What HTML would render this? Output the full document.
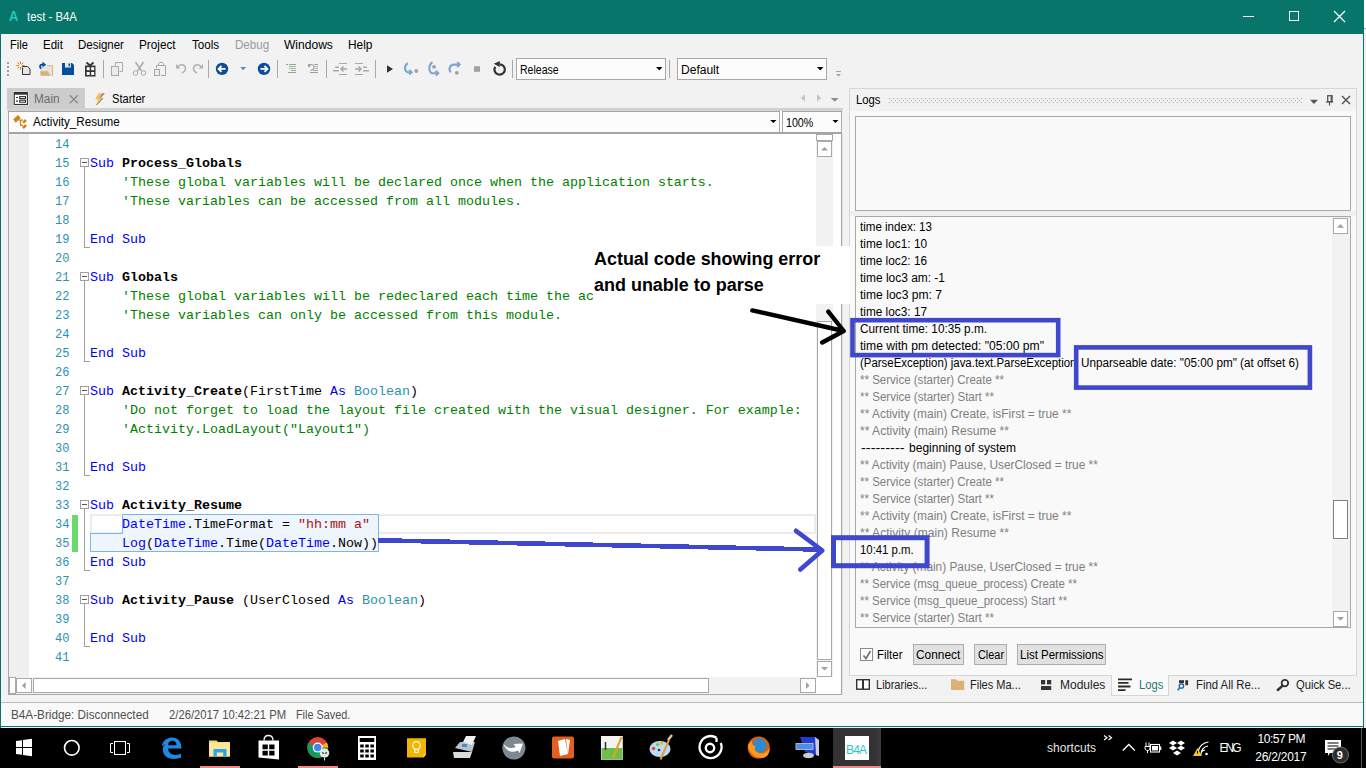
<!DOCTYPE html>
<html><head><meta charset="utf-8">
<style>
*{margin:0;padding:0;box-sizing:border-box}
html,body{width:1366px;height:768px;overflow:hidden;background:#f2f2f2;position:relative}
body{font-family:"Liberation Sans",sans-serif;font-size:12px;color:#000}
.a{position:absolute}
.t{position:absolute;white-space:pre;line-height:14px}
.mono{font-family:"Liberation Mono",monospace}
</style></head><body>
<!-- title bar -->
<div class="a" style="left:0;top:0;width:1364px;height:34px;background:#08756a"></div>
<div class="a" style="left:0;top:34px;width:1px;height:694px;background:#08756a"></div>
<div class="a" style="left:1363px;top:34px;width:1px;height:694px;background:#08756a"></div>
<div class="a" style="left:0;top:726px;width:1364px;height:1px;background:#08756a"></div>
<div class="a" style="left:1364px;top:0;width:2px;height:28px;background:#ffffff"></div>
<div class="a" style="left:1364px;top:28px;width:2px;height:1px;background:#a8a8a8"></div>
<div class="a" style="left:1364px;top:29px;width:2px;height:699px;background:#f4f1f1"></div>
<div class="t" style="left:9.4px;top:9px;font-size:14px;font-weight:bold;color:#25c6b9;transform:scaleX(0.9185);transform-origin:0.00px 0">A</div>
<div class="t" style="left:27.4px;top:10px;font-size:12px;color:#fff;transform:scaleX(0.9479);transform-origin:0.00px 0">test - B4A</div>
<!-- window buttons -->
<div class="a" style="left:1243px;top:16px;width:11px;height:1px;background:#fff"></div>
<div class="a" style="left:1289px;top:11px;width:10px;height:10px;border:1px solid #fff"></div>
<svg class="a" style="left:1333px;top:10px" width="13" height="13"><path d="M1 1L12 12M12 1L1 12" stroke="#fff" stroke-width="1.2"/></svg>

<!-- menu -->
<div class="t" style="left:10.2px;top:38px;transform:scaleX(0.9239);transform-origin:0.00px 0">File</div>
<div class="t" style="left:43.2px;top:38px;transform:scaleX(0.9600);transform-origin:0.00px 0">Edit</div>
<div class="t" style="left:78.3px;top:38px;transform:scaleX(0.9562);transform-origin:0.00px 0">Designer</div>
<div class="t" style="left:139.1px;top:38px;transform:scaleX(0.9793);transform-origin:0.00px 0">Project</div>
<div class="t" style="left:191.7px;top:38px;transform:scaleX(0.9679);transform-origin:0.00px 0">Tools</div>
<div class="t" style="left:234.5px;top:38px;color:#9a9a9a;transform:scaleX(0.9640);transform-origin:0.00px 0">Debug</div>
<div class="t" style="left:284.2px;top:38px;transform:scaleX(1.0036);transform-origin:0.00px 0">Windows</div>
<div class="t" style="left:348.1px;top:38px;transform:scaleX(0.9909);transform-origin:0.00px 0">Help</div>

<!-- TOOLBAR -->
<svg class="a" style="left:0;top:0" width="860" height="84">
<g fill="#a0a0a0"><rect x="7" y="62" width="2" height="2"/><rect x="7" y="66" width="2" height="2"/><rect x="7" y="70" width="2" height="2"/><rect x="7" y="74" width="2" height="2"/></g>
<!-- new -->
<path d="M22.5 66.5H27.5L30 69V74.5H22.5Z" fill="#e8e8e8" stroke="#333" stroke-width="1"/>
<g stroke="#e07800" stroke-width="1"><path d="M20.5 61.5V69.5M16.5 65.5H24.5M17.7 62.7L23.3 68.3M23.3 62.7L17.7 68.3"/></g>
<circle cx="20.5" cy="65.5" r="1.6" fill="#fff"/>
<!-- open -->
<rect x="40" y="65" width="12.8" height="11" fill="#e4e4e4"/>
<path d="M47 65.8H52.5V76" stroke="#e0b472" stroke-width="1.1" fill="none"/>
<path d="M40 71.2H47.6L50.9 75.8H41Z" fill="#ddb06c"/>
<path d="M41.4 68.3C39.2 67.4 39.6 64.6 42 64.6H44.5" stroke="#0050a0" stroke-width="1.8" fill="none"/>
<path d="M42.4 61.8L46.2 64.7L42.4 67.3Z" fill="#0050a0"/>
<!-- save -->
<path d="M62 63H72L74 65V75H62Z" fill="#0050a0"/>
<rect x="65" y="63" width="6" height="4.5" fill="#e8e8e8"/>
<rect x="68.5" y="63.5" width="1.6" height="2.8" fill="#0050a0"/>
<!-- package -->
<rect x="85" y="65.5" width="10.5" height="11" fill="#333"/>
<path d="M86.5 62.5L90 65.5L93.5 62.5" stroke="#333" stroke-width="1.8" fill="none"/>
<g fill="#fff"><rect x="86.7" y="67.2" width="3" height="3"/><rect x="91.2" y="67.2" width="3" height="3"/><rect x="86.7" y="72" width="3" height="3"/><rect x="91.2" y="72" width="3" height="3"/></g>
<g fill="#a8a8a8"><rect x="103" y="60" width="1" height="18"/><rect x="208" y="60" width="1" height="18"/><rect x="277" y="60" width="1" height="18"/><rect x="326" y="60" width="1" height="18"/><rect x="375" y="60" width="1" height="18"/><rect x="512" y="60" width="1" height="18"/><rect x="669" y="60" width="1" height="18"/></g>
<!-- copy -->
<g stroke="#a8a8a8" stroke-width="1" fill="none">
<path d="M115.5 65.5V62.5H122.5V71.5H119.5"/>
<rect x="111.5" y="66.5" width="7" height="9" fill="#ececec"/>
<!-- cut -->
<path d="M135.5 62L141.5 70.8M143.5 62L137.5 70.8" stroke-width="1.5"/>
<circle cx="135.5" cy="73" r="2.3"/><circle cx="143.5" cy="73" r="2.3"/>
<!-- paste -->
<path d="M156.5 68.5V65.5H165.5V75.5H161"/>
<path d="M158.5 65.5V63.5C158.5 62 163.5 62 163.5 63.5V65.5"/>
<rect x="154.5" y="69.5" width="5" height="6" fill="#ececec"/>
</g>
<g stroke="#b0b0b0" stroke-width="1.5" fill="none">
<path d="M178 66.5C181 63.5 185.5 65 185.5 68.5C185.5 70.5 184 72 182 73"/>
<path d="M201 66.5C198 63.5 193.5 65 193.5 68.5C193.5 70.5 195 72 197 73"/>
</g>
<path d="M176 64V68.5H180.5Z" fill="#b0b0b0"/><path d="M203 64V68.5H198.5Z" fill="#b0b0b0"/>
<!-- nav -->
<circle cx="222" cy="68.9" r="6.2" fill="#0a4d9c"/>
<path d="M225.5 68.9H219M221.5 66L218.5 68.9L221.5 71.8" stroke="#fff" stroke-width="1.8" fill="none"/>
<path d="M240.3 67H246L243.15 70.3Z" fill="#5b84c4"/>
<circle cx="264" cy="68.9" r="6.2" fill="#0a4d9c"/>
<path d="M260.5 68.9H267M264.5 66L267.5 68.9L264.5 71.8" stroke="#fff" stroke-width="1.8" fill="none"/>
<!-- comment -->
<g stroke-width="1">
<path d="M286 64.5H288M289 64.5H296M291 70.5H296M288 72.5H296" stroke="#a0a0a0"/>
<path d="M289 66.5H296M289 68.5H296" stroke="#8cc48c"/>
<path d="M314.5 64.5H318M313 70.5H318M310 72.5H318" stroke="#a0a0a0"/>
<path d="M315 66.5H318M315 68.5H318" stroke="#8cc48c"/>
</g>
<path d="M309 65.5L311 64.5C314.5 64.5 315 67.5 313 69.5L310.5 70.5" stroke="#a0a0a0" stroke-width="1.2" fill="none"/>
<rect x="308" y="64" width="2" height="3" fill="#a0a0a0"/>
<!-- outdent/indent -->
<g fill="#a8a8a8">
<rect x="339" y="63" width="8" height="1"/><rect x="339" y="74" width="8" height="1"/><rect x="335" y="66.5" width="4" height="1.5"/><rect x="333" y="70" width="6" height="1.5"/>
<rect x="355" y="63" width="8" height="1"/><rect x="355" y="74" width="8" height="1"/><rect x="363" y="66.5" width="4" height="1.5"/><rect x="363" y="70" width="6" height="1.5"/>
</g>
<g stroke="#a8a8a8" stroke-width="1.6" fill="none">
<path d="M347 69H341M343.5 66.5L341 69L343.5 71.5"/>
<path d="M355 69H361M358.5 66.5L361 69L358.5 71.5"/>
</g>
<!-- play -->
<path d="M387 65.2L393 69L387 72.8Z" fill="#333"/>
<!-- step into/over/out -->
<g stroke="#7ba6d3" stroke-width="2.1" fill="none">
<path d="M407.8 63.3C404.2 65 404 70.8 407.5 72.3H410.5"/>
<path d="M409.2 70L411.6 72.3L409.2 74.6"/>
<path d="M432.5 62.3C428.5 64 428.3 71.8 432 73.2H437.3"/>
<path d="M435.8 70.8L438.2 73.2L435.8 75.6"/>
<path d="M450.8 72.2C448.8 70.5 449 65 453.5 64.6H459.5"/>
<path d="M457.2 62.2L459.6 64.6L457.2 67"/>
</g>
<g fill="#a0a0a0"><circle cx="416.3" cy="71" r="1.9"/><circle cx="434" cy="66.8" r="1.9"/><circle cx="456.8" cy="72.8" r="1.9"/></g>
<rect x="474" y="66.2" width="6" height="5.6" fill="#a0a0a0"/>
<path d="M500 64.3A5.2 5.2 0 1 1 495.2 66.8" stroke="#333" stroke-width="2.2" fill="none"/>
<path d="M493.8 63.8L499.8 61V67Z" fill="#333"/>
<!-- grip right -->
<path d="M836.2 71.5H840.8" stroke="#a0a0a0" stroke-width="1"/>
<path d="M836.2 74H840.8L838.5 76.8Z" fill="#a0a0a0"/>
</svg>

<!-- combos -->
<div class="a" style="left:516px;top:58px;width:150px;height:22px;background:#fcfcfc;border:1px solid #a8a8a8"></div>
<div class="t" style="left:520.2px;top:63px;transform:scaleX(0.8795);transform-origin:0.00px 0">Release</div>
<svg class="a" style="left:656px;top:67px" width="7" height="4"><path d="M0 0H6.5L3.25 3.5Z" fill="#000"/></svg>
<div class="a" style="left:677px;top:58px;width:150px;height:22px;background:#fcfcfc;border:1px solid #a8a8a8"></div>
<div class="t" style="left:681.1px;top:63px;transform:scaleX(1.0026);transform-origin:0.00px 0">Default</div>
<svg class="a" style="left:817px;top:67px" width="7" height="4"><path d="M0 0H6.5L3.25 3.5Z" fill="#000"/></svg>

<!-- doc tabs -->
<div class="a" style="left:7px;top:88px;width:78px;height:20px;background:#cccccc"></div>
<div class="t" style="left:34.4px;top:92px;color:#6d6d6d;transform:scaleX(0.9846);transform-origin:0.00px 0">Main</div>
<div class="t" style="left:112.4px;top:92px;transform:scaleX(0.9250);transform-origin:0.00px 0">Starter</div>
<div class="a" style="left:7px;top:108px;width:836px;height:3px;background:#d2d2d2"></div>

<!-- module combo -->
<div class="a" style="left:8px;top:111px;width:772px;height:22px;background:#fcfcfc;border:1px solid #a8a8a8"></div>
<div class="a" style="left:780px;top:111px;width:2px;height:21px;background:#fff"></div>
<div class="t" style="left:33.4px;top:115px;transform:scaleX(0.9701);transform-origin:0.00px 0">Activity_Resume</div>
<div class="a" style="left:782px;top:111px;width:60px;height:22px;background:#fcfcfc;border:1px solid #a8a8a8"></div>
<div class="t" style="left:786px;top:116px;transform:scaleX(0.8878);transform-origin:0.00px 0">100%</div>

<!-- editor -->
<div class="a" style="left:8px;top:132px;width:834px;height:563px;background:#fff;border:1px solid #a8a8a8;border-top:2px solid #a5a5a5"></div>
<div class="a" style="left:9px;top:134px;width:20px;height:543px;background:#f0f0f0"></div>
<div class="a" style="left:842px;top:133px;width:1px;height:562px;background:#e2e2e2"></div>
<div class="a" style="left:90px;top:514px;width:726px;height:20px;border:2px solid #ececec"></div>
<svg class="a" style="left:0;top:0" width="842" height="700"><path d="M122.5 514.5H378.5V551.5H90.5V533.5H122.5Z" fill="#eef5fc" stroke="#7fb4e6" stroke-width="1"/></svg>
<div class="t mono" style="left:45.5px;top:136px;width:24px;text-align:right;line-height:19px;font-size:12px;color:#2b91af">14</div>
<div class="t mono" style="left:45.5px;top:155px;width:24px;text-align:right;line-height:19px;font-size:12px;color:#2b91af">15</div>
<div class="t mono" style="left:90px;top:154px;line-height:19px;font-size:13.33px"><span style="color:#0000ff">Sub</span><span style="color:#000"> </span><span style="color:#000;font-weight:bold">Process_Globals</span></div>
<div class="t mono" style="left:45.5px;top:174px;width:24px;text-align:right;line-height:19px;font-size:12px;color:#2b91af">16</div>
<div class="t mono" style="left:90px;top:173px;line-height:19px;font-size:13.33px"><span style="color:#000">    </span><span style="color:#008000">&#x27;These global variables will be declared once when the application starts.</span></div>
<div class="t mono" style="left:45.5px;top:193px;width:24px;text-align:right;line-height:19px;font-size:12px;color:#2b91af">17</div>
<div class="t mono" style="left:90px;top:192px;line-height:19px;font-size:13.33px"><span style="color:#000">    </span><span style="color:#008000">&#x27;These variables can be accessed from all modules.</span></div>
<div class="t mono" style="left:45.5px;top:212px;width:24px;text-align:right;line-height:19px;font-size:12px;color:#2b91af">18</div>
<div class="t mono" style="left:45.5px;top:231px;width:24px;text-align:right;line-height:19px;font-size:12px;color:#2b91af">19</div>
<div class="t mono" style="left:90px;top:230px;line-height:19px;font-size:13.33px"><span style="color:#0000ff">End Sub</span></div>
<div class="t mono" style="left:45.5px;top:250px;width:24px;text-align:right;line-height:19px;font-size:12px;color:#2b91af">20</div>
<div class="t mono" style="left:45.5px;top:269px;width:24px;text-align:right;line-height:19px;font-size:12px;color:#2b91af">21</div>
<div class="t mono" style="left:90px;top:268px;line-height:19px;font-size:13.33px"><span style="color:#0000ff">Sub</span><span style="color:#000"> </span><span style="color:#000;font-weight:bold">Globals</span></div>
<div class="t mono" style="left:45.5px;top:288px;width:24px;text-align:right;line-height:19px;font-size:12px;color:#2b91af">22</div>
<div class="t mono" style="left:90px;top:287px;line-height:19px;font-size:13.33px"><span style="color:#000">    </span><span style="color:#008000">&#x27;These global variables will be redeclared each time the activity is created.</span></div>
<div class="t mono" style="left:45.5px;top:307px;width:24px;text-align:right;line-height:19px;font-size:12px;color:#2b91af">23</div>
<div class="t mono" style="left:90px;top:306px;line-height:19px;font-size:13.33px"><span style="color:#000">    </span><span style="color:#008000">&#x27;These variables can only be accessed from this module.</span></div>
<div class="t mono" style="left:45.5px;top:326px;width:24px;text-align:right;line-height:19px;font-size:12px;color:#2b91af">24</div>
<div class="t mono" style="left:45.5px;top:345px;width:24px;text-align:right;line-height:19px;font-size:12px;color:#2b91af">25</div>
<div class="t mono" style="left:90px;top:344px;line-height:19px;font-size:13.33px"><span style="color:#0000ff">End Sub</span></div>
<div class="t mono" style="left:45.5px;top:364px;width:24px;text-align:right;line-height:19px;font-size:12px;color:#2b91af">26</div>
<div class="t mono" style="left:45.5px;top:383px;width:24px;text-align:right;line-height:19px;font-size:12px;color:#2b91af">27</div>
<div class="t mono" style="left:90px;top:382px;line-height:19px;font-size:13.33px"><span style="color:#0000ff">Sub</span><span style="color:#000"> </span><span style="color:#000;font-weight:bold">Activity_Create</span><span style="color:#000">(FirstTime </span><span style="color:#0000ff">As</span><span style="color:#000"> </span><span style="color:#2b91af">Boolean</span><span style="color:#000">)</span></div>
<div class="t mono" style="left:45.5px;top:402px;width:24px;text-align:right;line-height:19px;font-size:12px;color:#2b91af">28</div>
<div class="t mono" style="left:90px;top:401px;line-height:19px;font-size:13.33px"><span style="color:#000">    </span><span style="color:#008000">&#x27;Do not forget to load the layout file created with the visual designer. For example:</span></div>
<div class="t mono" style="left:45.5px;top:421px;width:24px;text-align:right;line-height:19px;font-size:12px;color:#2b91af">29</div>
<div class="t mono" style="left:90px;top:420px;line-height:19px;font-size:13.33px"><span style="color:#000">    </span><span style="color:#008000">&#x27;Activity.LoadLayout(&quot;Layout1&quot;)</span></div>
<div class="t mono" style="left:45.5px;top:440px;width:24px;text-align:right;line-height:19px;font-size:12px;color:#2b91af">30</div>
<div class="t mono" style="left:45.5px;top:459px;width:24px;text-align:right;line-height:19px;font-size:12px;color:#2b91af">31</div>
<div class="t mono" style="left:90px;top:458px;line-height:19px;font-size:13.33px"><span style="color:#0000ff">End Sub</span></div>
<div class="t mono" style="left:45.5px;top:478px;width:24px;text-align:right;line-height:19px;font-size:12px;color:#2b91af">32</div>
<div class="t mono" style="left:45.5px;top:497px;width:24px;text-align:right;line-height:19px;font-size:12px;color:#2b91af">33</div>
<div class="t mono" style="left:90px;top:496px;line-height:19px;font-size:13.33px"><span style="color:#0000ff">Sub</span><span style="color:#000"> </span><span style="color:#000;font-weight:bold">Activity_Resume</span></div>
<div class="t mono" style="left:45.5px;top:516px;width:24px;text-align:right;line-height:19px;font-size:12px;color:#2b91af">34</div>
<div class="t mono" style="left:90px;top:515px;line-height:19px;font-size:13.33px"><span style="color:#000">    </span><span style="color:#0000ff">DateTime</span><span style="color:#000">.TimeFormat = </span><span style="color:#a31515">&quot;hh:mm a&quot;</span></div>
<div class="t mono" style="left:45.5px;top:535px;width:24px;text-align:right;line-height:19px;font-size:12px;color:#2b91af">35</div>
<div class="t mono" style="left:90px;top:534px;line-height:19px;font-size:13.33px"><span style="color:#000">    </span><span style="color:#0000ff">Log</span><span style="color:#000">(</span><span style="color:#0000ff">DateTime</span><span style="color:#000">.Time(</span><span style="color:#0000ff">DateTime</span><span style="color:#000">.Now))</span></div>
<div class="t mono" style="left:45.5px;top:554px;width:24px;text-align:right;line-height:19px;font-size:12px;color:#2b91af">36</div>
<div class="t mono" style="left:90px;top:553px;line-height:19px;font-size:13.33px"><span style="color:#0000ff">End Sub</span></div>
<div class="t mono" style="left:45.5px;top:573px;width:24px;text-align:right;line-height:19px;font-size:12px;color:#2b91af">37</div>
<div class="t mono" style="left:45.5px;top:592px;width:24px;text-align:right;line-height:19px;font-size:12px;color:#2b91af">38</div>
<div class="t mono" style="left:90px;top:591px;line-height:19px;font-size:13.33px"><span style="color:#0000ff">Sub</span><span style="color:#000"> </span><span style="color:#000;font-weight:bold">Activity_Pause</span><span style="color:#000"> (UserClosed </span><span style="color:#0000ff">As</span><span style="color:#000"> </span><span style="color:#2b91af">Boolean</span><span style="color:#000">)</span></div>
<div class="t mono" style="left:45.5px;top:611px;width:24px;text-align:right;line-height:19px;font-size:12px;color:#2b91af">39</div>
<div class="t mono" style="left:45.5px;top:630px;width:24px;text-align:right;line-height:19px;font-size:12px;color:#2b91af">40</div>
<div class="t mono" style="left:90px;top:629px;line-height:19px;font-size:13.33px"><span style="color:#0000ff">End Sub</span></div>
<div class="t mono" style="left:45.5px;top:649px;width:24px;text-align:right;line-height:19px;font-size:12px;color:#2b91af">41</div>
<div class="a" style="left:80px;top:158px;width:9px;height:9px;border:1px solid #a0a0a0;background:#fff"></div>
<div class="a" style="left:82px;top:162px;width:5px;height:1px;background:#555"></div>
<div class="a" style="left:84px;top:167px;width:1px;height:80px;background:#a0a0a0"></div>
<div class="a" style="left:84px;top:247px;width:6px;height:1px;background:#a0a0a0"></div>
<div class="a" style="left:80px;top:272px;width:9px;height:9px;border:1px solid #a0a0a0;background:#fff"></div>
<div class="a" style="left:82px;top:276px;width:5px;height:1px;background:#555"></div>
<div class="a" style="left:84px;top:281px;width:1px;height:80px;background:#a0a0a0"></div>
<div class="a" style="left:84px;top:361px;width:6px;height:1px;background:#a0a0a0"></div>
<div class="a" style="left:80px;top:386px;width:9px;height:9px;border:1px solid #a0a0a0;background:#fff"></div>
<div class="a" style="left:82px;top:390px;width:5px;height:1px;background:#555"></div>
<div class="a" style="left:84px;top:395px;width:1px;height:80px;background:#a0a0a0"></div>
<div class="a" style="left:84px;top:475px;width:6px;height:1px;background:#a0a0a0"></div>
<div class="a" style="left:80px;top:500px;width:9px;height:9px;border:1px solid #a0a0a0;background:#fff"></div>
<div class="a" style="left:82px;top:504px;width:5px;height:1px;background:#555"></div>
<div class="a" style="left:84px;top:509px;width:1px;height:61px;background:#a0a0a0"></div>
<div class="a" style="left:84px;top:570px;width:6px;height:1px;background:#a0a0a0"></div>
<div class="a" style="left:80px;top:595px;width:9px;height:9px;border:1px solid #a0a0a0;background:#fff"></div>
<div class="a" style="left:82px;top:599px;width:5px;height:1px;background:#555"></div>
<div class="a" style="left:84px;top:604px;width:1px;height:42px;background:#a0a0a0"></div>
<div class="a" style="left:84px;top:646px;width:6px;height:1px;background:#a0a0a0"></div>
<div class="a" style="left:72px;top:515px;width:6px;height:37px;background:#6ad86a"></div>
<div class="a" style="left:816px;top:134px;width:17px;height:543px;background:#f2f2f2"></div>
<div class="a" style="left:816px;top:134px;width:17px;height:7px;background:#fff;border:1px solid #a8a8a8"></div>
<div class="a" style="left:817px;top:141px;width:15px;height:16px;background:#fff;border:1px solid #a8a8a8"></div>
<svg class="a" style="left:821px;top:147px" width="7" height="4"><path d="M0 3.6H7L3.5 0Z" fill="#a0a0a0"/></svg>
<div class="a" style="left:817px;top:321px;width:15px;height:339px;background:#fff;border:1px solid #a8a8a8"></div>
<div class="a" style="left:817px;top:661px;width:15px;height:16px;background:#fff;border:1px solid #a8a8a8"></div>
<svg class="a" style="left:821px;top:667px" width="7" height="4"><path d="M0 0H7L3.5 3.6Z" fill="#a0a0a0"/></svg>
<div class="a" style="left:9px;top:677px;width:807px;height:17px;background:#f2f2f2"></div>
<div class="a" style="left:9px;top:677px;width:7px;height:17px;background:#fff;border:1px solid #a8a8a8"></div>
<div class="a" style="left:16px;top:678px;width:16px;height:15px;background:#fff;border:1px solid #a8a8a8"></div>
<svg class="a" style="left:22px;top:682px" width="4" height="7"><path d="M3.6 0V7L0 3.5Z" fill="#a0a0a0"/></svg>
<div class="a" style="left:33px;top:678px;width:676px;height:15px;background:#fff;border:1px solid #a8a8a8"></div>
<div class="a" style="left:800px;top:678px;width:16px;height:15px;background:#fff;border:1px solid #a8a8a8"></div>
<svg class="a" style="left:806px;top:682px" width="4" height="7"><path d="M0 0V7L3.6 3.5Z" fill="#a0a0a0"/></svg>

<!-- Logs panel -->
<div class="a" style="left:849px;top:88px;width:508px;height:588px;background:#f9f9f9;border:1px solid #d6d6d6"></div>
<div class="a" style="left:850px;top:89px;width:506px;height:22px;background:#f2f2f2"></div>
<div class="t" style="left:855.6px;top:93px;transform:scaleX(0.9423);transform-origin:0.00px 0">Logs</div>
<div class="a" style="left:855px;top:116px;width:496px;height:95px;background:#f9f9f9;border:1px solid #a8a8a8"></div>
<div class="a" style="left:850px;top:211px;width:506px;height:5px;background:#f0f0f0"></div>
<div class="a" style="left:855px;top:216px;width:496px;height:412px;background:#f9f9f9;border:1px solid #a8a8a8"></div>
<div class="t" style="left:860px;top:220px;color:#000;transform:scaleX(0.9632);transform-origin:0.00px 0">time index: 13</div>
<div class="t" style="left:860px;top:237px;color:#000;transform:scaleX(0.9853);transform-origin:0.00px 0">time loc1: 10</div>
<div class="t" style="left:860px;top:254px;color:#000;transform:scaleX(0.9853);transform-origin:0.00px 0">time loc2: 16</div>
<div class="t" style="left:860px;top:271px;color:#000;transform:scaleX(0.9956);transform-origin:0.00px 0">time loc3 am: -1</div>
<div class="t" style="left:860px;top:288px;color:#000;transform:scaleX(1.0077);transform-origin:0.00px 0">time loc3 pm: 7</div>
<div class="t" style="left:860px;top:305px;color:#000;transform:scaleX(0.9853);transform-origin:0.00px 0">time loc3: 17</div>
<div class="t" style="left:860px;top:322px;color:#000;transform:scaleX(0.9816);transform-origin:0.00px 0">Current time: 10:35 p.m.</div>
<div class="t" style="left:860px;top:339px;color:#000;transform:scaleX(1.0110);transform-origin:0.00px 0">time with pm detected: &quot;05:00 pm&quot;</div>
<div class="t" style="left:860px;top:356px;color:#000;transform:scaleX(0.9516);transform-origin:0.00px 0">(ParseException) java.text.ParseException</div>
<div class="t" style="left:1081px;top:356px;color:#000;transform:scaleX(0.9743);transform-origin:0.00px 0">Unparseable date: &quot;05:00 pm&quot; (at offset 6)</div>
<div class="t" style="left:860px;top:373px;color:#808080;transform:scaleX(0.9600);transform-origin:0.00px 0">** Service (starter) Create **</div>
<div class="t" style="left:860px;top:390px;color:#808080;transform:scaleX(0.9614);transform-origin:0.00px 0">** Service (starter) Start **</div>
<div class="t" style="left:860px;top:407px;color:#808080;transform:scaleX(0.9949);transform-origin:0.00px 0">** Activity (main) Create, isFirst = true **</div>
<div class="t" style="left:860px;top:424px;color:#808080;transform:scaleX(1.0061);transform-origin:0.00px 0">** Activity (main) Resume **</div>
<div class="t" style="left:860.6px;top:441px;color:#000;transform:scaleX(1.2111);transform-origin:0.00px 0">---------</div>
<div class="t" style="left:908.5px;top:441px;color:#000;transform:scaleX(1.0023);transform-origin:0.00px 0">beginning of system</div>
<div class="t" style="left:860px;top:458px;color:#808080;transform:scaleX(0.9862);transform-origin:0.00px 0">** Activity (main) Pause, UserClosed = true **</div>
<div class="t" style="left:860px;top:475px;color:#808080;transform:scaleX(0.9600);transform-origin:0.00px 0">** Service (starter) Create **</div>
<div class="t" style="left:860px;top:492px;color:#808080;transform:scaleX(0.9614);transform-origin:0.00px 0">** Service (starter) Start **</div>
<div class="t" style="left:860px;top:509px;color:#808080;transform:scaleX(0.9949);transform-origin:0.00px 0">** Activity (main) Create, isFirst = true **</div>
<div class="t" style="left:860px;top:526px;color:#808080;transform:scaleX(1.0061);transform-origin:0.00px 0">** Activity (main) Resume **</div>
<div class="t" style="left:860px;top:543px;color:#000;transform:scaleX(0.9463);transform-origin:0.00px 0">10:41 p.m.</div>
<div class="t" style="left:860px;top:560px;color:#808080;transform:scaleX(0.9862);transform-origin:0.00px 0">** Activity (main) Pause, UserClosed = true **</div>
<div class="t" style="left:860px;top:577px;color:#808080;transform:scaleX(0.9538);transform-origin:0.00px 0">** Service (msg_queue_process) Create **</div>
<div class="t" style="left:860px;top:594px;color:#808080;transform:scaleX(0.9559);transform-origin:0.00px 0">** Service (msg_queue_process) Start **</div>
<div class="t" style="left:860px;top:611px;color:#808080;transform:scaleX(0.9614);transform-origin:0.00px 0">** Service (starter) Start **</div>
<div class="a" style="left:1332px;top:217px;width:18px;height:410px;background:#f2f2f2"></div>
<div class="a" style="left:1333px;top:218px;width:15px;height:16px;background:#fff;border:1px solid #a8a8a8"></div>
<svg class="a" style="left:1337px;top:224px" width="7" height="4"><path d="M0 3.7H7L3.5 0Z" fill="#a0a0a0"/></svg>
<div class="a" style="left:1333px;top:500px;width:15px;height:39px;background:#fff;border:1px solid #808080"></div>
<div class="a" style="left:1333px;top:611px;width:15px;height:16px;background:#fff;border:1px solid #a8a8a8"></div>
<svg class="a" style="left:1337px;top:617px" width="7" height="4"><path d="M0 0H7L3.5 3.7Z" fill="#a0a0a0"/></svg>
<div class="a" style="left:860px;top:648px;width:13px;height:13px;background:#fff;border:1px solid #8a8a8a"></div>
<svg class="a" style="left:862px;top:650px" width="10" height="10"><path d="M1.5 5.5L4 8.5L8.5 1" stroke="#707070" stroke-width="1.6" fill="none"/></svg>
<div class="t" style="left:877.4px;top:648px;transform:scaleX(0.9540);transform-origin:0.00px 0">Filter</div>
<div class="a" style="left:913px;top:644px;width:51px;height:21px;background:#e1e1e1;border:1px solid #adadad"></div>
<div class="t" style="left:916.2px;top:648px;transform:scaleX(0.9899);transform-origin:0.00px 0">Connect</div>
<div class="a" style="left:974px;top:644px;width:33px;height:21px;background:#e1e1e1;border:1px solid #adadad"></div>
<div class="t" style="left:977.5px;top:648px;transform:scaleX(0.9083);transform-origin:0.00px 0">Clear</div>
<div class="a" style="left:1017px;top:644px;width:89px;height:21px;background:#e1e1e1;border:1px solid #adadad"></div>
<div class="t" style="left:1020px;top:648px;transform:scaleX(0.9568);transform-origin:0.00px 0">List Permissions</div>
<div class="a" style="left:1111px;top:675px;width:58px;height:21px;background:#fafafa;border:1px solid #d6d6d6;border-top:none"></div>
<div class="t" style="left:876.4px;top:678px;color:#222;transform:scaleX(0.9179);transform-origin:0.00px 0">Libraries...</div>
<div class="t" style="left:970.2px;top:678px;color:#222;transform:scaleX(0.9174);transform-origin:0.00px 0">Files Ma...</div>
<div class="t" style="left:1059.6px;top:678px;color:#222;transform:scaleX(0.9983);transform-origin:0.00px 0">Modules</div>
<div class="t" style="left:1138.5px;top:678px;color:#1e7a7a;transform:scaleX(0.9308);transform-origin:0.00px 0">Logs</div>
<div class="t" style="left:1196.2px;top:678px;color:#222;transform:scaleX(0.9456);transform-origin:0.00px 0">Find All Re...</div>
<div class="t" style="left:1295.5px;top:678px;color:#222;transform:scaleX(0.9311);transform-origin:0.00px 0">Quick Se...</div>

<svg class="a" style="left:0;top:80px" width="1366" height="56">
<!-- Main tab icon -->
<rect x="13" y="11.3" width="15.7" height="14.4" fill="#fff"/>
<rect x="14.2" y="12.5" width="13.3" height="12" fill="#fff" stroke="#333" stroke-width="1.2"/>
<rect x="14.2" y="12.5" width="13.3" height="2.2" fill="#333"/>
<path d="M16 17.5H18M16 21.2H18" stroke="#333" stroke-width="1.2"/>
<rect x="19.7" y="16.6" width="5.8" height="2" fill="none" stroke="#333" stroke-width="1.1"/>
<rect x="19.7" y="20.2" width="5.8" height="2" fill="none" stroke="#333" stroke-width="1.1"/>
<path d="M69.8 15.2L77.8 23.2M77.8 15.2L69.8 23.2" stroke="#8a8a8a" stroke-width="1.3"/>
<!-- starter lightning -->
<defs><linearGradient id="lg" x1="0" y1="0" x2="1" y2="0"><stop offset="0" stop-color="#d8c050"/><stop offset="0.5" stop-color="#fbc060"/><stop offset="1" stop-color="#f06878"/></linearGradient></defs>
<path d="M98.6 13.2H104.2L100.2 18.2H103L96.3 25.2L98.2 19.6H95.2Z" fill="url(#lg)"/>
<path d="M104.2 13.2L100.2 18.2M103 18.2L96.3 25.2" stroke="#6a5a40" stroke-width="0.8" fill="none"/>
<!-- nav arrows -->
<path d="M805 14.2V21.8L800.8 18Z" fill="#c4c4c4"/>
<path d="M817 14.2V21.8L821.2 18Z" fill="#c4c4c4"/>
<path d="M830.8 17.9H838.7L834.75 21.8Z" fill="#8e8e8e"/>
<!-- module icon -->
<path d="M18 35L20.75 37.9L15.7 42.7L13.2 39.6Z" fill="#cd8414"/>
<path d="M24.9 39L26.9 40.9L24 43.6L22.3 42.2ZM24.9 44L26.9 45.9L23.9 48.9L22.2 47.3Z" fill="#cd8414"/>
<path d="M18.9 40.2H23M20.6 40.2V45.3H22.8" stroke="#cd8414" stroke-width="1.2" fill="none"/>
<!-- combo arrows -->
<path d="M770.2 40H776.5L773.35 43Z" fill="#000"/>
<path d="M832.5 40H838.4L835.45 43Z" fill="#000"/>
</svg>
<!-- Logs title decorations -->
<div class="a" style="left:888px;top:97px;width:414px;height:7px;background-image:radial-gradient(circle at 1.5px 1.5px,#9a9a9a 0.8px,transparent 1px),radial-gradient(circle at 3.5px 3.5px,#9a9a9a 0.8px,transparent 1px);background-size:4px 4px;background-position:0 0,0 0;opacity:0.9"></div>
<svg class="a" style="left:1300px;top:86px" width="60" height="24">
<path d="M10 13.8H17.9L13.95 17.9Z" fill="#555"/>
<rect x="27.7" y="9.7" width="4.3" height="6" fill="none" stroke="#555" stroke-width="1.3"/>
<rect x="30.6" y="9.2" width="1.6" height="6.5" fill="#555"/>
<path d="M25.8 16H33.2M29.5 16V19.5" stroke="#555" stroke-width="1.2"/>
<path d="M42 10L50 18M50 10L42 18" stroke="#555" stroke-width="1.5"/>
</svg>
<!-- bottom tab icons -->
<svg class="a" style="left:850px;top:674px" width="460" height="24">
<rect x="6.7" y="5.7" width="6" height="9.5" fill="#fff" stroke="#333" stroke-width="1.4"/>
<rect x="13.3" y="5.7" width="6" height="9.5" fill="#fff" stroke="#333" stroke-width="1.4"/>
<path d="M101 5.3H106L107.3 6.7H114.2V16H101Z" fill="#ddb173"/>
<rect x="191" y="6" width="4.2" height="4.4" fill="#333"/><rect x="197" y="6" width="4.2" height="4.4" fill="#333"/><rect x="191" y="12" width="10.2" height="4" fill="#333"/>
<path d="M268 5.3H282M268 8.9H278.5M268 12.5H280.5M268 16.2H275.5" stroke="#2a2a2a" stroke-width="1.8"/>
<rect x="329" y="6.2" width="5" height="3" fill="#333"/><rect x="335.3" y="6.2" width="2.8" height="5" fill="#333"/>
<circle cx="331.4" cy="12" r="2.2" fill="none" stroke="#1d5fb8" stroke-width="1.3"/>
<path d="M329.8 13.7L327.6 16.2" stroke="#1d5fb8" stroke-width="1.5"/>
<circle cx="434.9" cy="9.1" r="3.3" fill="none" stroke="#333" stroke-width="1.8"/>
<path d="M432.4 11.8L427.8 16" stroke="#333" stroke-width="2.5" stroke-linecap="round"/>
</svg>
<!-- status bar -->
<div class="a" style="left:1px;top:702px;width:1362px;height:1px;background:#bcbcbc"></div>
<div class="a" style="left:1px;top:703px;width:1362px;height:23px;background:#f9f9f9"></div>
<div class="t" style="left:11px;top:708px;color:#505050;transform:scaleX(0.9783);transform-origin:0.00px 0">B4A-Bridge: Disconnected</div>
<div class="t" style="left:169px;top:708px;color:#505050;transform:scaleX(0.9379);transform-origin:0.00px 0">2/26/2017 10:42:21 PM</div>
<div class="t" style="left:296px;top:708px;color:#505050;transform:scaleX(0.9033);transform-origin:0.00px 0">File Saved.</div>

<!-- taskbar -->
<div class="a" style="left:0;top:728px;width:1366px;height:40px;background:#000"></div>
<svg class="a" style="left:0;top:728px" width="1366" height="40">
<!-- windows logo -->
<path d="M16 13L22 12.2V19H16Z M23 12L32 10.8V19H23Z M16 20H22V26.8L16 26Z M23 20H32V28.2L23 27Z" fill="#fff"/>
<!-- cortana -->
<circle cx="71.8" cy="19.8" r="7.3" stroke="#fff" stroke-width="1.6" fill="none"/>
<!-- task view -->
<rect x="114.5" y="13.5" width="11" height="13" stroke="#fff" stroke-width="1" fill="none"/>
<path d="M113 15.5H110.5V24.5H113M127 15.5H129.5V24.5H127" stroke="#fff" stroke-width="1" fill="none"/>
<!-- edge -->
<path d="M161.5 18.5C163 12 168 9.5 172 9.5C178 9.5 181.5 14 181.5 20.5H168C168.5 25 172 27 175.5 27C178 27 180 26.3 181 25.6V29.6C179.5 30.5 177 31 174 31C167 31 162.8 27 162.8 21.5C162.8 18 164.5 15.5 167 14C165 15.5 163.5 17 161.5 18.5ZM168 17.3H176.5C176.5 14.5 174.8 12.8 172.4 12.8C170 12.8 168.3 14.5 168 17.3Z" fill="#1e88e5"/>
<!-- explorer -->
<path d="M209 12.5H216.5L218 14H230V28.5H209Z" fill="#f9d776"/>
<rect x="209" y="15" width="21" height="13.5" fill="#fde59a"/>
<path d="M213.5 28.6V21H226.5V28.6H223.2V24.5H216.8V28.6Z" fill="#2aa4e8"/>
<rect x="200" y="38" width="40" height="2" fill="#f38585"/>
<!-- store -->
<path d="M258.5 12.5H279V31.5L258.5 29.5Z" fill="#fff"/>
<path d="M264 12.5C264 8.5 266 7.5 268.5 7.5C271 7.5 273 8.5 273 12.5" stroke="#fff" stroke-width="1.3" fill="none"/>
<path d="M262.5 16.5H267.8V21.3H262.5ZM269.2 16.5H274.5V21.3H269.2ZM262.5 22.7H267.8V27.5H262.5ZM269.2 22.7H274.5V27.5H269.2Z" fill="#000"/>
<!-- chrome -->
<circle cx="317.7" cy="19.6" r="10.5" fill="#db4437"/>
<path d="M317.7 19.6L308.6 14.4A10.5 10.5 0 0 0 312.5 28.7Z" fill="#0f9d58"/>
<path d="M317.7 19.6L312.5 28.7A10.5 10.5 0 0 0 328.2 19.6Z" fill="#0f9d58"/>
<path d="M317.7 19.6L328.2 19.6A10.5 10.5 0 0 0 326.8 14.4Z" fill="#f4b400"/>
<circle cx="317.7" cy="19.6" r="5" fill="#fff"/>
<circle cx="317.7" cy="19.6" r="3.8" fill="#4285f4"/>
<ellipse cx="324.5" cy="25" rx="4.8" ry="4.5" fill="#e8e8e8"/>
<path d="M322 24.5L324 25.5M327 24.5L325 25.5" stroke="#333" stroke-width="1.3"/>
<path d="M324.5 29.5V32.5" stroke="#ddd" stroke-width="1"/>
<rect x="298" y="38" width="40" height="2" fill="#f38585"/>
<!-- calculator -->
<rect x="358" y="8" width="18" height="24" fill="#fff"/>
<rect x="359.7" y="10" width="14.6" height="4" fill="#000"/>
<path d="M360.2 16.5h3.5v3h-3.5zM365.3 16.5h3.5v3h-3.5zM370.4 16.5h3.5v3h-3.5zM360.2 21.5h3.5v3h-3.5zM365.3 21.5h3.5v3h-3.5zM370.4 21.5h3.5v3h-3.5zM360.2 26.5h3.5v3h-3.5zM365.3 26.5h3.5v3h-3.5zM370.4 26.5h3.5v3h-3.5z" fill="#000"/>
<!-- keep -->
<path d="M407 10.3H426V26.5L423.5 29.4H407Z" fill="#f4b400"/>
<path d="M423.5 29.4V26.5H426Z" fill="#fce59b"/>
<circle cx="416.5" cy="17.5" r="3.8" stroke="#fff" stroke-width="1.2" fill="none"/>
<path d="M414.8 21V24.5H418.2V21" stroke="#fff" stroke-width="1.2" fill="none"/>
<!-- fax -->
<path d="M455 20L460 14H475L472 24Z" fill="#b8c2c8"/>
<path d="M463 14L466 8H476L472 17Z" fill="#f2f2f2"/>
<path d="M453 24L472 24L470 30H454Z" fill="#d8dde0"/>
<rect x="462" y="16" width="5" height="3" fill="#3a8ee0"/>
<!-- gray circle -->
<circle cx="513.9" cy="20" r="11.5" fill="#7d8a91"/>
<path d="M503.5 16C506 23 511 25.5 518 22.5L519.5 25L523 15.5L513.5 16L515.8 19C511 21 507 20 503.5 16Z" fill="#fff"/>
<!-- nitro -->
<rect x="552" y="8.6" width="22" height="21.9" rx="2" fill="#e25f1f"/>
<path d="M558 13L565 11L568 26L560 28ZM566 11L570 12L568 26Z" fill="#fff"/>
<!-- notepad++ -->
<rect x="601" y="8" width="21.8" height="23.8" fill="#f3f3f3"/>
<rect x="601.5" y="20" width="20.8" height="11.5" fill="#6cc04a"/>
<path d="M605.5 14V22" stroke="#333" stroke-width="1.5"/>
<path d="M613 30L621.5 9" stroke="#e8a020" stroke-width="2"/>
<!-- paint -->
<ellipse cx="660" cy="21" rx="10.5" ry="8" fill="#bcdcf4"/>
<circle cx="653.5" cy="20.5" r="1.8" fill="#e74c3c"/>
<circle cx="657.5" cy="16.5" r="1.6" fill="#6ec24a"/>
<circle cx="661.5" cy="15" r="1.8" fill="#f5b324"/>
<circle cx="659" cy="22" r="1.3" fill="#333"/>
<path d="M660.5 31.5L669 12" stroke="#e39a3a" stroke-width="2"/>
<path d="M668 12L672 7" stroke="#d9c69d" stroke-width="2.5"/>
<!-- groove -->
<path d="M716.5 9.8A11 11 0 1 0 720.8 15" stroke="#fff" stroke-width="2.3" fill="none"/>
<path d="M716.5 9.8V14" stroke="#fff" stroke-width="2.3"/>
<circle cx="710" cy="20" r="4.2" stroke="#fff" stroke-width="2.4" fill="none"/>
<!-- firefox -->
<circle cx="758.7" cy="19.6" r="11" fill="#e66000"/>
<circle cx="759.5" cy="17.5" r="7.2" fill="#2e8ad1"/>
<path d="M748 17C749 26 756 30 762 30C768 29.5 770 24 769.5 20C767 25 762 27 757.5 24.5C754 22.5 754.5 19 756 18C753 18.5 751.5 16 752 13Z" fill="#ff9a1e"/>
<!-- network -->
<path d="M800 9L815 9L819 12V28L805 24Z" fill="#1f3bd0"/>
<path d="M815 9L819 12V28L816 27Z" fill="#ccd"/>
<rect x="796" y="15.5" width="17" height="6" fill="#4a8ee8" stroke="#ccc" stroke-width="0.8"/>
<ellipse cx="808.5" cy="27.5" rx="5.5" ry="2.8" fill="#ccc"/>
<!-- b4a active -->
<rect x="833" y="0" width="48" height="38" fill="#333333"/>
<rect x="877" y="0" width="4" height="38" fill="#3a3a3a"/>
<rect x="845" y="8" width="24" height="24" fill="#fff"/>
<text x="846" y="26" font-family="Liberation Sans" font-size="12" fill="#29c7c7" textLength="21">B4A</text>
<rect x="833" y="38" width="48" height="2" fill="#f38585"/>
<!-- tray -->
<text x="1047" y="24" font-family="Liberation Sans" font-size="12" fill="#e6e6e6" textLength="49">shortcuts</text>
<path d="M1104 7.5L1107 9.7L1104 11.9M1108.5 7.5L1111.5 9.7L1108.5 11.9" stroke="#fff" stroke-width="1.2" fill="none"/>
<path d="M1122.8 22.5L1128.8 16.5L1134.8 22.5" stroke="#fff" stroke-width="1.3" fill="none"/>
<path d="M1146 14.5V18.5M1149 14.5V18.5M1145 18.5H1150V20C1150 21.5 1149 22.5 1147.5 22.5C1146 22.5 1145 21.5 1145 20ZM1147.5 22.5V25" stroke="#fff" stroke-width="1" fill="none"/>
<rect x="1150.5" y="16.5" width="9" height="7.5" stroke="#fff" stroke-width="1.1" fill="none"/>
<rect x="1160" y="18.5" width="1.3" height="3.5" fill="#fff"/>
<rect x="1152" y="18" width="6" height="4.5" fill="#fff"/>
<path d="M1173 12.5L1177 15L1173 17.5L1169 15ZM1181 12.5L1185 15L1181 17.5L1177 15ZM1173 17.5L1177 20L1173 22.5L1169 20ZM1181 17.5L1185 20L1181 22.5L1177 20ZM1177 22.5L1181 25L1177 27.5L1173 25Z" fill="#fff"/>
<path d="M1201 26.5A8 8 0 0 1 1208 18M1201 26.5A4.5 4.5 0 0 1 1205 22M1198 24A11.5 11.5 0 0 1 1208.5 14" stroke="#fff" stroke-width="1.2" fill="none"/>
<circle cx="1206.5" cy="26" r="1.3" fill="#fff"/>
<path d="M1193 28L1197.5 20L1202 28Z" fill="#f7c526"/>
<path d="M1197.5 23V25.5" stroke="#000" stroke-width="1"/>
<text x="1219.5" y="24" font-family="Liberation Sans" font-size="12" fill="#fff" textLength="22">ENG</text>
<text x="1257.5" y="14.8" font-family="Liberation Sans" font-size="12" fill="#fff" textLength="48">10:57 PM</text>
<text x="1255.2" y="32.7" font-family="Liberation Sans" font-size="12" fill="#fff" textLength="51.5">26/2/2017</text>
<path d="M1325 12H1341V25H1330L1328 28V25H1325Z" fill="#fff"/>
<path d="M1327.5 15H1338.5M1327.5 18H1338.5M1327.5 21H1336" stroke="#000" stroke-width="1.2"/>
<circle cx="1340.5" cy="27" r="8" fill="#2b2b2b" stroke="#888" stroke-width="0.8"/>
<text x="1336.7" y="31.3" font-family="Liberation Sans" font-size="11" font-weight="bold" fill="#fff">9</text>
<rect x="1361" y="0" width="1" height="40" fill="#555"/>
</svg>

<!-- annotations -->
<div class="a" style="left:593px;top:246px;width:257px;height:58px;background:#fff"></div>
<div class="t" style="left:593.7px;top:250px;font-size:18px;line-height:18px;font-weight:bold;transform:scaleX(0.9964);transform-origin:0.00px 0">Actual code showing error</div>
<div class="t" style="left:593.7px;top:276px;font-size:18px;line-height:18px;font-weight:bold;transform:scaleX(0.9976);transform-origin:0.00px 0">and unable to parse</div>
<svg class="a" style="left:0;top:0" width="1366" height="728">
<path d="M752.3 310.4L843.7 331M828.3 311.7L843.7 331L822.2 342.5" stroke="#000" stroke-width="4.4" fill="none" stroke-linecap="round" stroke-linejoin="round"/>
<rect x="852.5" y="320.2" width="205.7" height="34.9" stroke="#3f48cc" stroke-width="4.6" fill="none"/>
<rect x="1076.2" y="347.4" width="233.7" height="40.2" stroke="#3f48cc" stroke-width="4.6" fill="none"/>
<rect x="833.5" y="537.7" width="93.6" height="28" stroke="#3f48cc" stroke-width="5" fill="none"/>
<path d="M378 540.3L822 549.6" stroke="#3f48cc" stroke-width="4.6" fill="none" shape-rendering="crispEdges"/>
<path d="M796 530.8L822.3 550.5L800.3 569.5" stroke="#3f48cc" stroke-width="4.6" fill="none" stroke-linecap="round" stroke-linejoin="round"/>
</svg>
</body></html>
